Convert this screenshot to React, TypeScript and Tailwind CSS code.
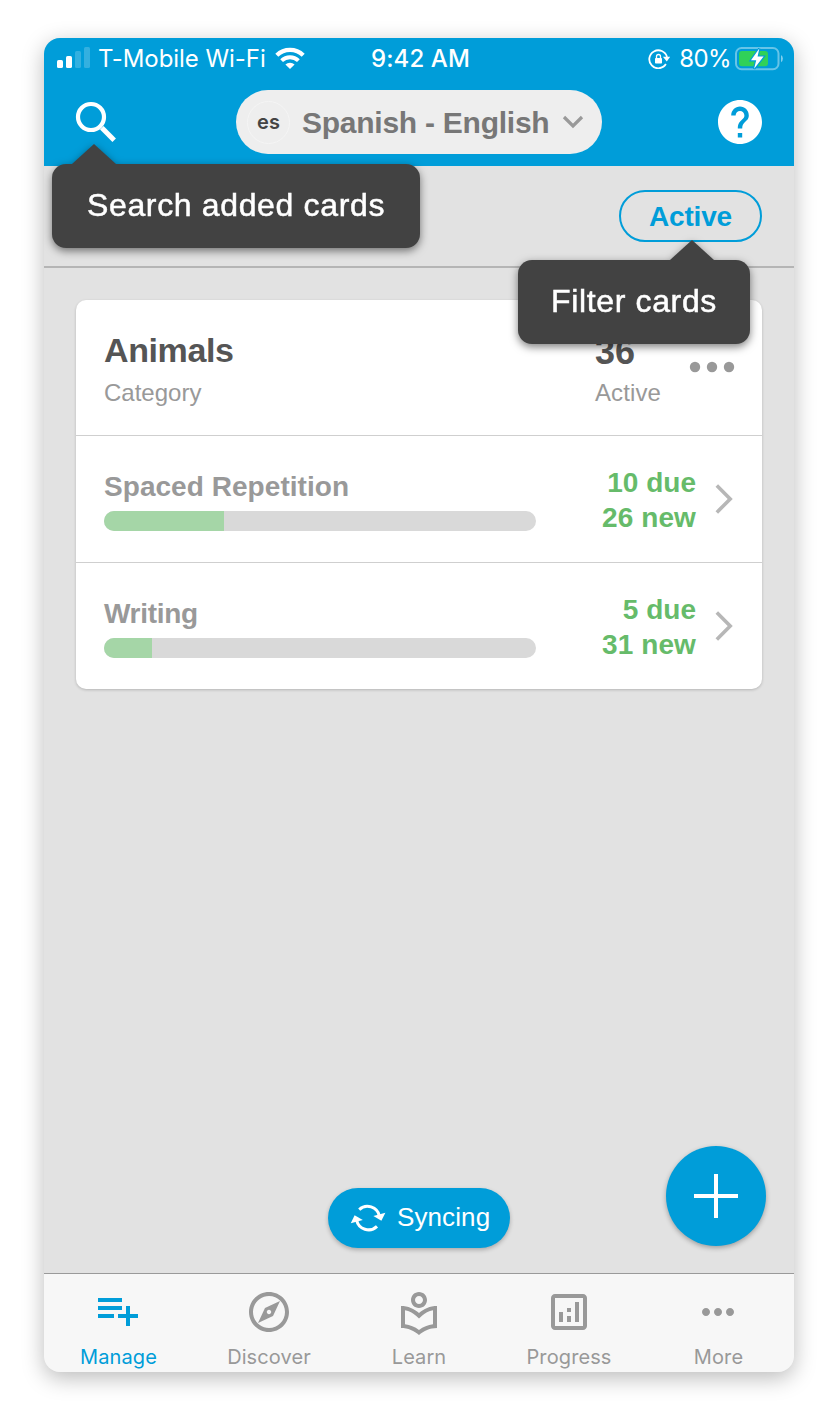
import type { ReactNode } from "react";

function SignalIcon() {
  return (
    <svg width="33" height="21" viewBox="57 47 33 21" fill="#fff">
      <rect x="57" y="60" width="6" height="8" rx="1.6" />
      <rect x="66" y="56" width="6" height="12" rx="1.6" />
      <rect x="75" y="51" width="6" height="17" rx="1.6" opacity=".2" />
      <rect x="84" y="47" width="6" height="21" rx="1.6" opacity=".2" />
    </svg>
  );
}

function WifiIcon() {
  return (
    <svg width="30" height="22" viewBox="0 0 30 22" fill="none" stroke="#fff" strokeWidth="4.3">
      <path d="M1.8 8.3 A19 19 0 0 1 28.2 8.3" />
      <path d="M6.6 13.6 A12.2 12.2 0 0 1 23.4 13.6" strokeWidth="4" />
      <path d="M15 22 L10.4 17.6 A6.8 6.8 0 0 1 19.6 17.6 Z" fill="#fff" stroke="none" />
    </svg>
  );
}

function RotationLockIcon() {
  return (
    <svg width="22" height="20" viewBox="648 48.5 22 20" fill="none" stroke="#fff">
      <path d="M665.9 63.6 A9 9 0 1 1 667 56.5" strokeWidth="1.8" />
      <path d="M662.9 56.3 H670.2 L666.8 61 Z" fill="#fff" stroke="none" />
      <rect x="655" y="57.6" width="7" height="5.4" rx=".8" fill="#fff" stroke="none" />
      <path d="M656.5 58 V56 a2 2 0 0 1 4 0 V58" strokeWidth="1.3" />
    </svg>
  );
}

function BatteryIcon() {
  return (
    <svg width="49" height="24" viewBox="735 46 49 24">
      <rect x="736" y="47" width="42.5" height="21.3" rx="5.6" fill="none" stroke="#fff" strokeOpacity=".4" strokeWidth="2" />
      <path d="M781 54 q1.9 1 1.9 3.6 t-1.9 3.6 Z" fill="#fff" fillOpacity=".5" />
      <rect x="739" y="50" width="29" height="15.3" rx="3" fill="#30d158" />
      <path d="M759.3 47.6 L751 59.2 H756.2 L754.1 67.8 L763.6 55.6 H757.6 Z" fill="#fff" stroke="#009dd9" strokeWidth="2.4" paintOrder="stroke" />
    </svg>
  );
}

function SearchIcon() {
  return (
    <svg width="42" height="42" viewBox="75 101 42 42" fill="none" stroke="#fff">
      <circle cx="91" cy="117" r="13" strokeWidth="4.2" />
      <path d="M101.8 127.8 L114.2 140.2" strokeWidth="5" />
    </svg>
  );
}

function HelpIcon() {
  return (
    <svg width="44" height="44" viewBox="2 2 20 20" fill="#fff">
      <path d="M12 2C6.48 2 2 6.48 2 12s4.48 10 10 10 10-4.48 10-10S17.52 2 12 2zm1 17h-2v-2h2v2zm2.07-7.75l-.9.92C13.45 12.9 13 13.5 13 15h-2v-.5c0-1.1.45-2.1 1.17-2.83l1.24-1.26c.37-.36.59-.86.59-1.41 0-1.1-.9-2-2-2s-2 .9-2 2H8c0-2.21 1.79-4 4-4s4 1.79 4 4c0 .88-.36 1.68-.93 2.25z" />
    </svg>
  );
}

function SyncIcon() {
  return (
    <svg width="36" height="28" viewBox="350 1204 36 28" fill="#fff">
      <g fill="none" stroke="#fff" strokeWidth="3">
        <path d="M359.2 1209.6 A12.2 12.2 0 0 1 379.4 1216" />
        <path d="M377 1226.4 A12.2 12.2 0 0 1 356.6 1220" />
      </g>
      <path d="M373.4 1216 L385.4 1212.8 L381.4 1220.8 Z" />
      <path d="M362.8 1220 L350.8 1223.2 L354.6 1215.2 Z" />
    </svg>
  );
}

function Chevron() {
  return (
    <svg width="18" height="32" viewBox="0 0 18 32" fill="none" stroke="#b7b7b7" strokeWidth="3.6">
      <path d="M1.8 2.6 L15.2 16 L1.8 29.4" />
    </svg>
  );
}

function Tooltip({ children, className, arrow }: { children: ReactNode; className: string; arrow: string }) {
  return (
    <div className={`absolute z-10 drop-shadow-[0_3px_4px_rgba(0,0,0,0.5)] ${className}`}>
      <svg className={`absolute -top-5 ${arrow}`} width="44" height="21" viewBox="0 0 44 21" fill="#424242">
        <path d="M0 20 L22 0 L44 20 V21 H0 Z" />
      </svg>
      <div className="flex h-[84px] items-center justify-center rounded-[14px] bg-[#424242] pb-0.5 text-[32px] leading-[38px] whitespace-nowrap text-white [-webkit-text-stroke:0.5px_#fff]">
        {children}
      </div>
    </div>
  );
}

type Deck = { name: string; due: number; fresh: number; width: string; tracking: string };

const decks: Deck[] = [
  { name: "Spaced Repetition", due: 10, fresh: 26, width: "w-[120px]", tracking: "tracking-[0.05px]" },
  { name: "Writing", due: 5, fresh: 31, width: "w-12", tracking: "tracking-[-0.3px]" },
];

function DeckRow({ deck }: { deck: Deck }) {
  return (
    <div className="flex h-[127px] border-t border-[#cfcfcf] pr-7 pl-7">
      <div className="w-[432px] pt-[35px]">
        <div className={`text-[28px] leading-8 font-bold text-[#999] ${deck.tracking}`}>{deck.name}</div>
        <div className="mt-2 h-5 overflow-hidden rounded-full bg-[#d9d9d9]">
          <div className={`h-full bg-[#a5d6a7] ${deck.width}`} />
        </div>
      </div>
      <div className="flex flex-1 items-center justify-end">
        <div className="pt-0.5 text-right text-[28px] leading-[35px] font-bold text-[#66bb6a]">
          <div>{deck.due} due</div>
          <div className="tracking-[0.1px]">{deck.fresh} new</div>
        </div>
        <div className="-mr-px ml-[19px] pr-0.5">
          <Chevron />
        </div>
      </div>
    </div>
  );
}

const tabs = [
  {
    label: "Manage",
    offset: "-mt-0.5 mb-0.5 -ml-0.5",
    shift: "mr-px",
    path: "M14 10H2v2h12v-2zm0-4H2v2h12V6zm4 8v-4h-2v4h-4v2h4v4h2v-4h4v-2h-4zM2 16h8v-2H2v2z",
  },
  {
    label: "Discover",
    offset: "",
    shift: "",
    path: "M12 2C6.48 2 2 6.48 2 12s4.48 10 10 10 10-4.48 10-10S17.52 2 12 2zm0 18c-4.41 0-8-3.59-8-8s3.59-8 8-8 8 3.59 8 8-3.59 8-8 8zm-5.5-2.5l7.51-3.49L17.5 6.5 9.99 9.99 6.5 17.5zm5.5-6.6c.61 0 1.1.49 1.1 1.1s-.49 1.1-1.1 1.1-1.1-.49-1.1-1.1.49-1.1 1.1-1.1z",
  },
  {
    label: "Learn",
    offset: "mt-0.5 -mb-0.5",
    shift: "",
    path: "M16 5c0-2.21-1.79-4-4-4S8 2.79 8 5s1.79 4 4 4 4-1.79 4-4zm-4 2c-1.1 0-2-.9-2-2s.9-2 2-2 2 .9 2 2-.9 2-2 2zm0 4.55C9.64 9.35 6.48 8 3 8v11c3.48 0 6.64 1.35 9 3.55 2.36-2.19 5.52-3.55 9-3.55V8c-3.48 0-6.64 1.35-9 3.55zm7 5.58c-2.53.34-4.93 1.3-7 2.82-2.06-1.52-4.47-2.49-7-2.83v-6.95c2.1.38 4.05 1.35 5.64 2.83L12 14.28l1.36-1.27c1.59-1.48 3.54-2.45 5.64-2.83v6.95z",
  },
  {
    label: "Progress",
    offset: "",
    shift: "",
    path: "M19 3H5c-1.1 0-2 .9-2 2v14c0 1.1.9 2 2 2h14c1.1 0 2-.9 2-2V5c0-1.1-.9-2-2-2zm0 16H5V5h14v14zM7 12h2v5H7zM15 7h2v10h-2zM11 14h2v3h-2zM11 10h2v2h-2z",
  },
  {
    label: "More",
    offset: "-ml-0.5",
    shift: "mr-px",
    path: "M6 10c-1.1 0-2 .9-2 2s.9 2 2 2 2-.9 2-2-.9-2-2-2zm12 0c-1.1 0-2 .9-2 2s.9 2 2 2 2-.9 2-2-.9-2-2-2zm-6 0c-1.1 0-2 .9-2 2s.9 2 2 2 2-.9 2-2-.9-2-2-2z",
  },
];

export default function App() {
  return (
    <div className="h-[1410px] w-[838px] bg-white px-11 pt-[38px] font-['Liberation_Sans',Arial,sans-serif]">
      <div className="flex h-[1334px] w-[750px] flex-col overflow-visible rounded-2xl bg-[#e2e2e2] shadow-[0_6px_22px_rgba(0,0,0,0.27)]">
        <header className="rounded-t-2xl bg-[#009dd9]">
          <div className="grid h-10 grid-cols-[1fr_auto_1fr] items-center pt-0.5 pr-2.5 pl-[13px] font-[Inter,sans-serif] text-2xl leading-none text-white">
            <div className="flex items-center">
              <span className="pb-[3px]"><SignalIcon /></span>
              <span className="ml-2 tracking-[-0.05px]">T-Mobile Wi-Fi</span>
              <span className="ml-[9px] pb-0.5"><WifiIcon /></span>
            </div>
            <span className="font-medium tracking-[0.1px]">9:42 AM</span>
            <div className="flex items-center justify-end">
              <RotationLockIcon />
              <span className="mr-1 ml-[9px] tracking-[-0.6px]">80%</span>
              <span className="pb-px"><BatteryIcon /></span>
            </div>
          </div>
          <div className="grid h-[88px] grid-cols-[160px_366px_1fr] items-center pl-8">
            <div className="relative">
              <div className="-ml-px"><SearchIcon /></div>
              <Tooltip className="top-[63px] -left-6 w-[368px] tracking-[0.65px]" arrow="left-5">
                Search added cards
              </Tooltip>
            </div>
            <div className="flex h-16 items-center rounded-full bg-[#eee] pl-[11px]">
              <div className="flex size-[43px] items-center justify-center rounded-full border border-[#f5f5f5] font-[Inter,sans-serif] text-[20px] leading-none font-semibold text-[#444]">
                es
              </div>
              <span className="ml-3 pt-0.5 text-[30px] leading-9 font-bold tracking-[-0.25px] whitespace-nowrap text-[#777]">
                Spanish - English
              </span>
              <svg className="ml-[13px]" width="22" height="14" viewBox="0 0 22 14" fill="none" stroke="#999" strokeWidth="3.2">
                <path d="M2 2 L11 11 L20 2" />
              </svg>
            </div>
            <div className="flex justify-end pr-8"><HelpIcon /></div>
          </div>
        </header>

        <div className="flex h-[102px] items-start justify-end border-b-2 border-[#b5b5b5] pt-6 pr-8">
          <div className="relative">
            <div className="flex h-[52px] w-[143px] items-center justify-center rounded-full border-2 border-[#009dd9] pt-0.5 text-[28px] leading-8 font-bold tracking-[-0.2px] text-[#009dd9]">
              Active
            </div>
            <Tooltip className="top-[70px] right-3 w-[232px] tracking-[0.65px]" arrow="left-[152px]">
              Filter cards
            </Tooltip>
          </div>
        </div>

        <main className="flex flex-1 flex-col justify-between pt-8">
          <section className="mx-8 w-[686px] rounded-[10px] bg-white shadow-[0_1px_3px_rgba(0,0,0,0.2)]">
            <div className="flex h-[135px] pt-[30px] pl-7">
              <div className="w-[491px]">
                <div className="text-[34px] leading-10 font-bold tracking-[-0.4px] text-[#555]">Animals</div>
                <div className="mt-[9px] text-2xl leading-7 text-[#999]">Category</div>
              </div>
              <div className="w-[94px]">
                <div className="pt-0.5 text-[36px] leading-10 font-bold text-[#555]">36</div>
                <div className="mt-[7px] text-2xl leading-7 tracking-[0.1px] text-[#999]">Active</div>
              </div>
              <svg className="mt-[31px]" width="46" height="12" viewBox="0 0 46 12" fill="#999">
                <circle cx="6" cy="6" r="5.2" />
                <circle cx="23" cy="6" r="5.2" />
                <circle cx="40" cy="6" r="5.2" />
              </svg>
            </div>
            {decks.map((deck) => (
              <DeckRow key={deck.name} deck={deck} />
            ))}
          </section>

          <div className="flex items-end justify-end pr-7 pb-[27px]">
            <div className="mr-[156px] mb-[-2px] flex h-[60px] w-[182px] items-center rounded-full bg-[#009dd9] pl-[22px] text-[26px] text-white shadow-[0_2px_4px_rgba(0,0,0,0.25)]">
              <SyncIcon />
              <span className="ml-[11px] -translate-y-px tracking-[0.1px]">Syncing</span>
            </div>
            <div className="flex size-[100px] items-center justify-center rounded-full bg-[#009dd9] shadow-[0_2px_5px_rgba(0,0,0,0.3)]">
              <svg width="44" height="44" viewBox="0 0 44 44" fill="none" stroke="#fff" strokeWidth="4">
                <path d="M22 0 V44 M0 22 H44" />
              </svg>
            </div>
          </div>
        </main>

        <nav className="grid h-[99px] grid-cols-5 rounded-b-2xl border-t border-[#9a9a9a] bg-[#f7f7f7] pt-3.5">
          {tabs.map((tab, i) => (
            <div key={tab.label} className={`flex flex-col items-center ${i === 0 ? "text-[#009dd9]" : "text-[#999]"}`}>
              <svg className={tab.offset} width="48" height="48" viewBox="0 0 24 24" fill="currentColor">
                <path d={tab.path} />
              </svg>
              <span className={`mt-[9px] font-[Inter,sans-serif] text-[20px] leading-6 tracking-[0.1px] ${tab.shift}`}>
                {tab.label}
              </span>
            </div>
          ))}
        </nav>
      </div>
    </div>
  );
}
